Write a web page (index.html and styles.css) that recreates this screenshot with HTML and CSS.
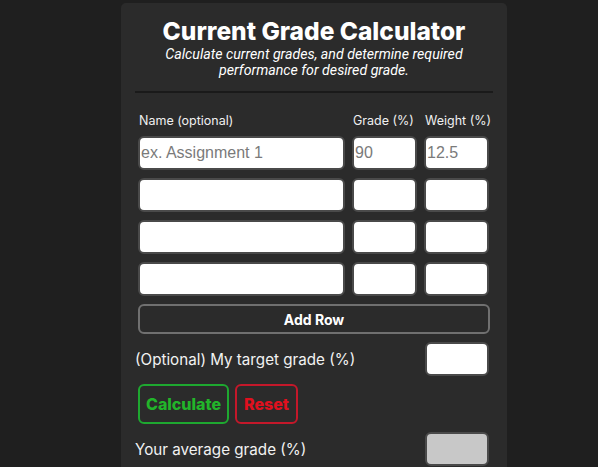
FILE: index.html
```html
<!DOCTYPE html>
<html>
<head>
<meta charset="utf-8">
<link rel="stylesheet" href="styles.css">
</head>
<body>
<div class="card">
  <h1 class="title">Current Grade Calculator</h1>
  <p class="subtitle">Calculate current grades, and determine required<br>performance for desired grade.</p>
  <div class="rule"></div>
  <div class="grid">
    <div class="lbl">Name (optional)</div>
    <div class="lbl">Grade (%)</div>
    <div class="lbl">Weight (%)</div>
    <input class="inp" placeholder="ex. Assignment 1">
    <input class="inp" placeholder="90">
    <input class="inp" placeholder="12.5">
    <input class="inp"><input class="inp"><input class="inp">
    <input class="inp"><input class="inp"><input class="inp">
    <input class="inp"><input class="inp"><input class="inp">
  </div>
  <button class="addrow">Add Row</button>
  <div class="line">
    <span class="text">(Optional) My target grade (%)</span>
    <input class="inp small">
  </div>
  <div class="btns">
    <button class="btn calc">Calculate</button>
    <button class="btn reset">Reset</button>
  </div>
  <div class="line avg">
    <span class="text">Your average grade (%)</span>
    <input class="inp small grey" disabled>
  </div>
</div>
</body>
</html>
```
FILE: styles.css
```css
html, body {
  margin: 0;
  padding: 0;
  background: #1f1f1f;
  height: 100%;
  overflow: hidden;
}
body {
  font-family: Inter, "Noto Sans", sans-serif;
  color: #ffffff;
}
.card {
  width: 386px;
  margin: 3px 0 0 121px;
  background: #2b2b2b;
  border-radius: 5px;
  padding: 15px 14px 20px 14px;
  box-sizing: border-box;
  height: 480px;
}
.title {
  margin: 0;
  text-align: center;
  font-family: Inter, sans-serif;
  font-weight: 800;
  font-size: 24.5px;
  line-height: 27px;
}
.subtitle {
  margin: 1px 0 0 0;
  text-align: center;
  font-family: Roboto, sans-serif;
  font-style: italic;
  font-size: 14.2px;
  line-height: 16px;
}
.rule {
  height: 2px;
  background: #1a1a1a;
  margin: 13px 0 0 0;
}
.grid {
  display: grid;
  grid-template-columns: 207px 65px 65px;
  column-gap: 7px;
  row-gap: 8px;
  margin: 21px 0 0 3px;
}
.lbl {
  font-size: 12.5px;
  line-height: 14px;
  margin: 0 0 0 1px;
  color: #f0f0f0;
  white-space: nowrap;
}
.inp {
  box-sizing: border-box;
  height: 34px;
  width: 100%;
  border: 2px solid #4a4a4a;
  border-radius: 6px;
  background: #ffffff;
  font-family: "Liberation Sans", Arial, sans-serif;
  font-size: 16px;
  padding: 0 0 0 1px;
  margin: 0;
  outline: none;
}
.inp::placeholder {
  color: #7a7a7a;
}
.addrow {
  display: block;
  box-sizing: border-box;
  width: 352px;
  height: 30px;
  margin: 8px 0 0 3px;
  background: #2b2b2b;
  border: 2px solid #707070;
  border-radius: 6px;
  color: #ffffff;
  font-family: Inter, sans-serif;
  font-weight: 700;
  font-size: 14px;
}
.line {
  display: flex;
  align-items: center;
  justify-content: space-between;
  margin: 8px 4px 0 0;
}
.text {
  font-size: 15.2px;
  color: #f2f2f2;
}
.small {
  width: 64px;
}
.grey {
  background: #c8c8c8;
}
.btns {
  display: flex;
  gap: 6px;
  margin: 8px 0 0 3px;
}
.btn {
  box-sizing: border-box;
  height: 40px;
  background: #2b2b2b;
  border-radius: 6px;
  font-family: Inter, sans-serif;
  font-weight: 800;
  font-size: 16px;
  padding: 0 6px;
}
.calc {
  width: 91px;
  border: 2px solid #1ea830;
  color: #22b52a;
}
.reset {
  width: 63px;
  border: 2px solid #c4182a;
  color: #e0101e;
}
.avg {
  margin-top: 8px;
}
```
